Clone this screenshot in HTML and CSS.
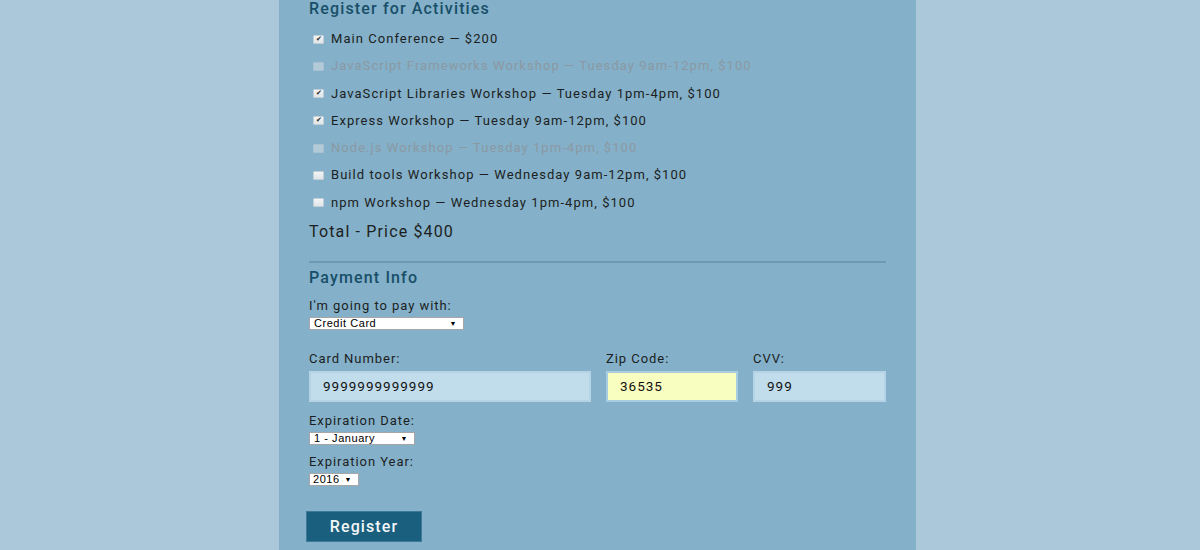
FILE: index.html
```html
<!DOCTYPE html>
<html>
<head>
<meta charset="utf-8">
<link rel="stylesheet" href="styles.css">
</head>
<body>
<div class="page">
  <form class="form">
    <h2 class="section-title first">Register for Activities</h2>
    <div class="activities">
      <label class="activity"><span class="box checked">✔</span><span>Main Conference — $200</span></label>
      <label class="activity disabled"><span class="box"></span><span>JavaScript Frameworks Workshop — Tuesday 9am-12pm, $100</span></label>
      <label class="activity"><span class="box checked">✔</span><span>JavaScript Libraries Workshop — Tuesday 1pm-4pm, $100</span></label>
      <label class="activity"><span class="box checked">✔</span><span>Express Workshop — Tuesday 9am-12pm, $100</span></label>
      <label class="activity disabled"><span class="box"></span><span>Node.js Workshop — Tuesday 1pm-4pm, $100</span></label>
      <label class="activity"><span class="box"></span><span>Build tools Workshop — Wednesday 9am-12pm, $100</span></label>
      <label class="activity"><span class="box"></span><span>npm Workshop — Wednesday 1pm-4pm, $100</span></label>
    </div>
    <div class="total">Total - Price $400</div>
    <hr class="divider">
    <h2 class="section-title">Payment Info</h2>
    <div class="field-label">I'm going to pay with:</div>
    <div class="select select-pay"><span>Credit Card</span><span class="arrow">▼</span></div>
    <div class="card-row">
      <div class="col col-card">
        <div class="field-label">Card Number:</div>
        <div class="input">9999999999999</div>
      </div>
      <div class="col col-zip">
        <div class="field-label">Zip Code:</div>
        <div class="input zip">36535</div>
      </div>
      <div class="col col-cvv">
        <div class="field-label">CVV:</div>
        <div class="input">999</div>
      </div>
    </div>
    <div class="field-label exp">Expiration Date:</div>
    <div class="select select-month"><span>1 - January</span><span class="arrow">▼</span></div>
    <div class="field-label exp-year">Expiration Year:</div>
    <div class="select select-year"><span>2016</span><span class="arrow">▼</span></div>
    <button type="button" class="btn">Register</button>
  </form>
</div>
</body>
</html>
```

FILE: styles.css
```css
* { box-sizing: border-box; }
html, body { margin: 0; padding: 0; }
body {
  background: #abc8da;
  font-family: Roboto, "Liberation Sans", sans-serif;
  color: #1c1f22;
  height: 550px;
  overflow: hidden;
}
.page {
  width: 637px;
  margin-left: 279px;
  background: #84b0c9;
  height: 550px;
}
.form {
  padding: 0 30px;
  display: flex;
  flex-direction: column;
  align-items: flex-start;
}
.section-title {
  margin: 0;
  font-size: 16px;
  font-weight: 500;
  letter-spacing: 1.15px;
  color: #184f68;
  line-height: 18px;
}
.activities {
  margin-top: 12px;
  display: flex;
  flex-direction: column;
  gap: 9.3px;
}
.activity {
  display: flex;
  align-items: center;
  font-size: 13px;
  letter-spacing: 1.05px;
  line-height: 18px;
}
.activity.disabled { color: #8b99a3; }
.box {
  width: 11px;
  height: 9px;
  margin: 0 7px 0 4px;
  background: linear-gradient(#f2f4f5, #e0e5e8);
  border: 1px solid #c3cfd7;
  border-radius: 1px;
  font-size: 7px;
  line-height: 7px;
  text-align: center;
  color: #222;
  letter-spacing: 0;
}
.activity.disabled .box { background: #b3cad8; border-color: #a8c2d2; }
.total {
  margin-top: 11px;
  font-size: 16px;
  letter-spacing: 1.15px;
  line-height: 18px;
}
.divider {
  width: 577px;
  border: 0;
  height: 2px;
  background: #6e9ab3;
  margin: 20px 0 6px 0;
  align-self: flex-start;
}
.field-label {
  font-size: 13px;
  letter-spacing: 0.95px;
  line-height: 16px;
}
.section-title + .field-label { margin-top: 11px; }
.select {
  display: flex;
  justify-content: space-between;
  align-items: center;
  background: #fff;
  border: 1px solid #a6a6a6;
  height: 13px;
  font-family: "Liberation Sans", Arial, sans-serif;
  font-size: 11px;
  letter-spacing: 0.55px;
  padding: 0 6px 0 4px;
  color: #000;
  margin-top: 3px;
}
.arrow { font-size: 7px; }
.select-pay { width: 155px; }
.select-month { width: 106px; }
.select-year { width: 50px; padding-left: 3px; }
.card-row {
  margin-top: 21px;
  display: flex;
  gap: 15px;
}
.col { display: flex; flex-direction: column; gap: 4px; }
.col-card { width: 282px; }
.col-zip { width: 132px; }
.col-cvv { width: 133px; }
.input {
  height: 31px;
  background: #c1dceb;
  border: 2px solid #b5d3e4;
  font-size: 13.5px;
  letter-spacing: 1.0px;
  line-height: 27px;
  padding-left: 12px;
  color: #111;
}
.input.zip { background: #f8fdc0; border-color: #a9cde0; }
.exp { margin-top: 11px; }
.exp-year { margin-top: 9px; }
.btn {
  margin-top: 25px;
  margin-left: -3px;
  width: 116px;
  height: 31px;
  background: #1a5f7e;
  border: 1px solid #3c7a97;
  color: #f2f6f8;
  font-family: Roboto, "Liberation Sans", sans-serif;
  font-size: 16px;
  font-weight: 500;
  letter-spacing: 1.1px;
  cursor: pointer;
}
```
